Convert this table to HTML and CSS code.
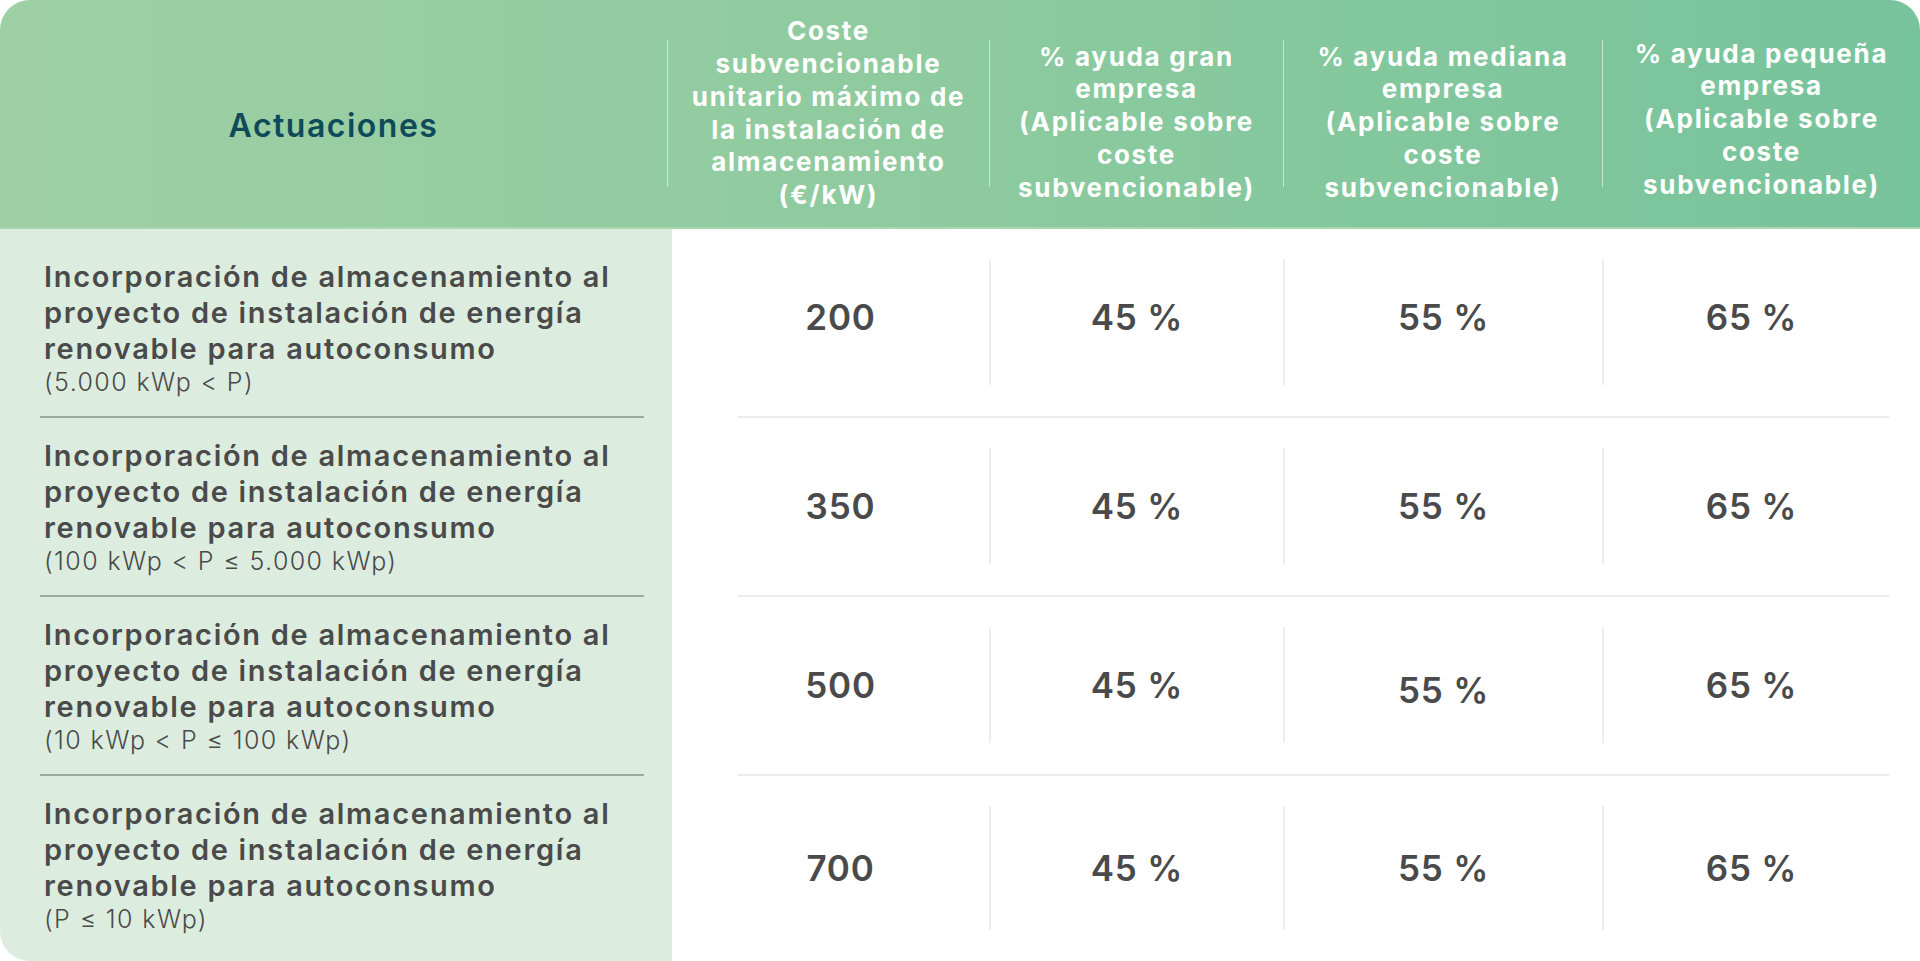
FILE: index.html
```html
<!DOCTYPE html>
<html lang="es">
<head>
<meta charset="utf-8">
<title>Actuaciones</title>
<link rel="stylesheet" href="styles.css">
</head>
<body>
<div class="table">
  <div class="head">
    <div class="th-main">Actuaciones</div>
    <div class="th-col th-c2"><div class="th-text">Coste<br>subvencionable<br>unitario máximo de<br>la instalación de<br>almacenamiento<br>(€/kW)</div></div>
    <div class="th-col th-c3"><div class="th-text">% ayuda gran<br>empresa<br>(Aplicable sobre<br>coste<br>subvencionable)</div></div>
    <div class="th-col th-c4"><div class="th-text">% ayuda mediana<br>empresa<br>(Aplicable sobre<br>coste<br>subvencionable)</div></div>
    <div class="th-col th-c5"><div class="th-text">% ayuda pequeña<br>empresa<br>(Aplicable sobre<br>coste<br>subvencionable)</div></div>
  </div>
  <div class="rows">
    <div class="row row-first">
      <div class="label"><div class="label-inner">
        <p class="label-title">Incorporación de almacenamiento al<br>proyecto de instalación de energía<br>renovable para autoconsumo</p>
        <p class="label-range">(5.000 kWp &lt; P)</p>
      </div></div>
      <div class="values">
        <div class="val val-c2">200</div>
        <div class="val val-mid"><span class="val-in">45 %</span></div>
        <div class="val val-mid"><span class="val-in">55 %</span></div>
        <div class="val val-mid val-c5"><span class="val-in">65 %</span></div>
      </div>
    </div>
    <div class="row">
      <div class="label"><div class="label-inner">
        <p class="label-title">Incorporación de almacenamiento al<br>proyecto de instalación de energía<br>renovable para autoconsumo</p>
        <p class="label-range">(100 kWp &lt; P ≤ 5.000 kWp)</p>
      </div></div>
      <div class="values">
        <div class="val val-c2">350</div>
        <div class="val val-mid"><span class="val-in">45 %</span></div>
        <div class="val val-mid"><span class="val-in">55 %</span></div>
        <div class="val val-mid val-c5"><span class="val-in">65 %</span></div>
      </div>
    </div>
    <div class="row">
      <div class="label"><div class="label-inner">
        <p class="label-title">Incorporación de almacenamiento al<br>proyecto de instalación de energía<br>renovable para autoconsumo</p>
        <p class="label-range">(10 kWp &lt; P ≤ 100 kWp)</p>
      </div></div>
      <div class="values">
        <div class="val val-c2">500</div>
        <div class="val val-mid"><span class="val-in">45 %</span></div>
        <div class="val val-mid"><span class="val-in val-low">55 %</span></div>
        <div class="val val-mid val-c5"><span class="val-in">65 %</span></div>
      </div>
    </div>
    <div class="row row-last">
      <div class="label"><div class="label-inner">
        <p class="label-title">Incorporación de almacenamiento al<br>proyecto de instalación de energía<br>renovable para autoconsumo</p>
        <p class="label-range">(P ≤ 10 kWp)</p>
      </div></div>
      <div class="values">
        <div class="val val-c2">700</div>
        <div class="val val-mid"><span class="val-in">45 %</span></div>
        <div class="val val-mid"><span class="val-in">55 %</span></div>
        <div class="val val-mid val-c5"><span class="val-in">65 %</span></div>
      </div>
    </div>
  </div>
</div>
</body>
</html>
```
FILE: styles.css
```css
* { box-sizing: border-box; }
html, body { margin: 0; padding: 0; background: #ffffff; }
body {
  font-family: "Inter", "Open Sans", "DejaVu Sans", sans-serif;
  width: 1920px;
  height: 961px;
  overflow: hidden;
}
.table {
  width: 1920px;
  height: 961px;
  display: flex;
  flex-direction: column;
  border-radius: 30px 30px 0 30px;
  overflow: hidden;
}
.head {
  height: 229px;
  flex: none;
  display: grid;
  grid-template-columns: 667px 322px 294px 319px 1fr;
  align-items: center;
  background: linear-gradient(90deg, #9ed0a4 0%, #8fcb9f 45%, #77c39b 100%);
  border-bottom: 2px solid #a9d6ae;
}
.th-main {
  text-align: center;
  color: #0f4a5a;
  font-weight: 600;
  font-size: 32px;
  letter-spacing: 1.5px;
  padding-top: 24px;
}
.th-col {
  height: 147px;
  border-left: 1px solid rgba(255, 255, 255, 0.55);
  display: flex;
  align-items: center;
  justify-content: center;
  color: #ffffff;
}
.th-text {
  text-align: center;
  font-weight: 700;
  font-size: 26px;
  line-height: 32.7px;
  letter-spacing: 1.7px;
  white-space: nowrap;
}
.th-c3 .th-text, .th-c4 .th-text { padding-top: 18px; }
.th-c5 .th-text { padding-top: 12px; }
.rows {
  flex: 1;
  display: flex;
  flex-direction: column;
}
.row {
  display: grid;
  grid-template-columns: 672px 1fr;
}
.row-last { flex: 1; }
.label {
  background: #dcede0;
  padding: 0 28px 0 40px;
}
.label-inner {
  padding: 20px 0 18px 4px;
  border-bottom: 2px solid #98ab9d;
}
.row-first .label-inner { padding-top: 30px; }
.row-last .label-inner { border-bottom: none; padding-bottom: 26px; }
.label-title {
  margin: 0;
  color: #4a4a4a;
  font-weight: 600;
  font-size: 29px;
  line-height: 36px;
  letter-spacing: 1.7px;
  white-space: nowrap;
}
.label-range {
  margin: 0;
  color: #4a4a4a;
  font-weight: 300;
  font-size: 25px;
  line-height: 31px;
  letter-spacing: 1.4px;
  white-space: nowrap;
}
.values {
  margin: 0 31px 0 66px;
  border-bottom: 2px solid #ececec;
  display: grid;
  grid-template-columns: 251px 294px 319px 1fr;
  padding: 30px 0 31px;
}
.row-first .values .val { padding-bottom: 10px; }
.row-last .values { border-bottom: none; }
.val {
  display: flex;
  align-items: center;
  justify-content: center;
  color: #4a4a4a;
  font-weight: 600;
  font-size: 35px;
  letter-spacing: 0.8px;
}
.val-c2 { padding-right: 46px; }
.val-mid { border-left: 2px solid #ededed; }
.val-c5 { padding-left: 10px; }
.val-low { padding-top: 10px; }
```
